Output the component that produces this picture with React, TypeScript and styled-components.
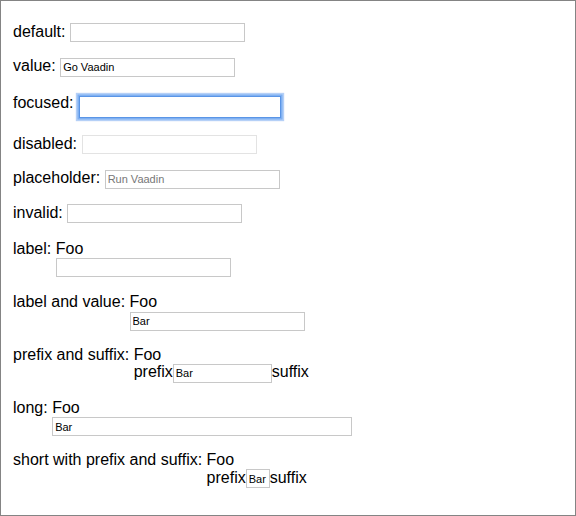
import React from "react";
import styled, { createGlobalStyle, css } from "styled-components";

const GlobalStyle = createGlobalStyle`
  html, body {
    margin: 0;
    padding: 0;
    background: #ffffff;
  }
  body {
    font-family: "Liberation Sans", Arial, sans-serif;
    color: #000000;
  }
`;

const Frame = styled.div`
  box-sizing: border-box;
  width: 576px;
  height: 516px;
  border: 1px solid #848484;
  padding: 21.5px 11px 0 12px;
  display: flex;
  flex-direction: column;
  gap: 15.1px;
  font-size: 16px;
`;

const Row = styled.div`
  display: flex;
  align-items: baseline;
  column-gap: 4.45px;
`;

const Caption = styled.span`
  white-space: nowrap;
`;

const Field = styled.span`
  display: inline-flex;
  flex-direction: column;
  align-items: flex-start;
`;

const FieldLabel = styled.span<{ $tight?: boolean }>`
  line-height: ${(p) => (p.$tight ? "18px" : "19.5px")};
`;

const InputLine = styled.span`
  display: inline-flex;
  align-items: baseline;
  line-height: 16px;
`;

const Input = styled.input<{ $width?: number; $focused?: boolean }>`
  box-sizing: border-box;
  width: ${(p) => p.$width ?? 175}px;
  height: 19px;
  margin: 0;
  padding: 0 2px;
  border: 1px solid #c8c8c8;
  border-radius: 0;
  background: #ffffff;
  font-family: "Liberation Sans", Arial, sans-serif;
  font-size: 11px;
  color: #000000;
  outline: none;

  &::placeholder {
    color: #777777;
  }

  &:disabled {
    border-color: #e3e3e3;
    background: #ffffff;
  }

  ${(p) =>
    p.$focused &&
    css`
      width: 202px;
      height: 22px;
      margin: 4px 0 2px 1px;
      padding: 0 2px 5px 2px;
      border: 1px solid #5a95e6;
      box-shadow: 0 0 0 1.5px #7fb0f2, 0 0 1px 3px rgba(120, 170, 240, 0.55);
    `}
`;

type FieldProps = {
  caption: string;
  label?: string;
  prefix?: string;
  suffix?: string;
  value?: string;
  placeholder?: string;
  width?: number;
  disabled?: boolean;
  focused?: boolean;
};

function TextField({
  caption,
  label,
  prefix,
  suffix,
  value,
  placeholder,
  width,
  disabled,
  focused,
}: FieldProps) {
  const input = (
    <Input
      type="text"
      readOnly
      defaultValue={value}
      placeholder={placeholder}
      disabled={disabled}
      $width={width}
      $focused={focused}
    />
  );
  return (
    <Row>
      <Caption>{caption}:</Caption>
      <Field>
        {label && <FieldLabel $tight={!!prefix}>{label}</FieldLabel>}
        {prefix || suffix ? (
          <InputLine>
            {prefix}
            {input}
            {suffix}
          </InputLine>
        ) : (
          input
        )}
      </Field>
    </Row>
  );
}

export default function App() {
  return (
    <>
      <GlobalStyle />
      <Frame>
        <TextField caption="default" />
        <TextField caption="value" value="Go Vaadin" />
        <TextField caption="focused" focused />
        <TextField caption="disabled" disabled />
        <TextField caption="placeholder" placeholder="Run Vaadin" />
        <TextField caption="invalid" />
        <TextField caption="label" label="Foo" />
        <TextField caption="label and value" label="Foo" value="Bar" />
        <TextField
          caption="prefix and suffix"
          label="Foo"
          value="Bar"
          prefix="prefix"
          suffix="suffix"
          width={99}
        />
        <TextField caption="long" label="Foo" value="Bar" width={300} />
        <TextField
          caption="short with prefix and suffix"
          label="Foo"
          value="Bar"
          prefix="prefix"
          suffix="suffix"
          width={24}
        />
      </Frame>
    </>
  );
}
